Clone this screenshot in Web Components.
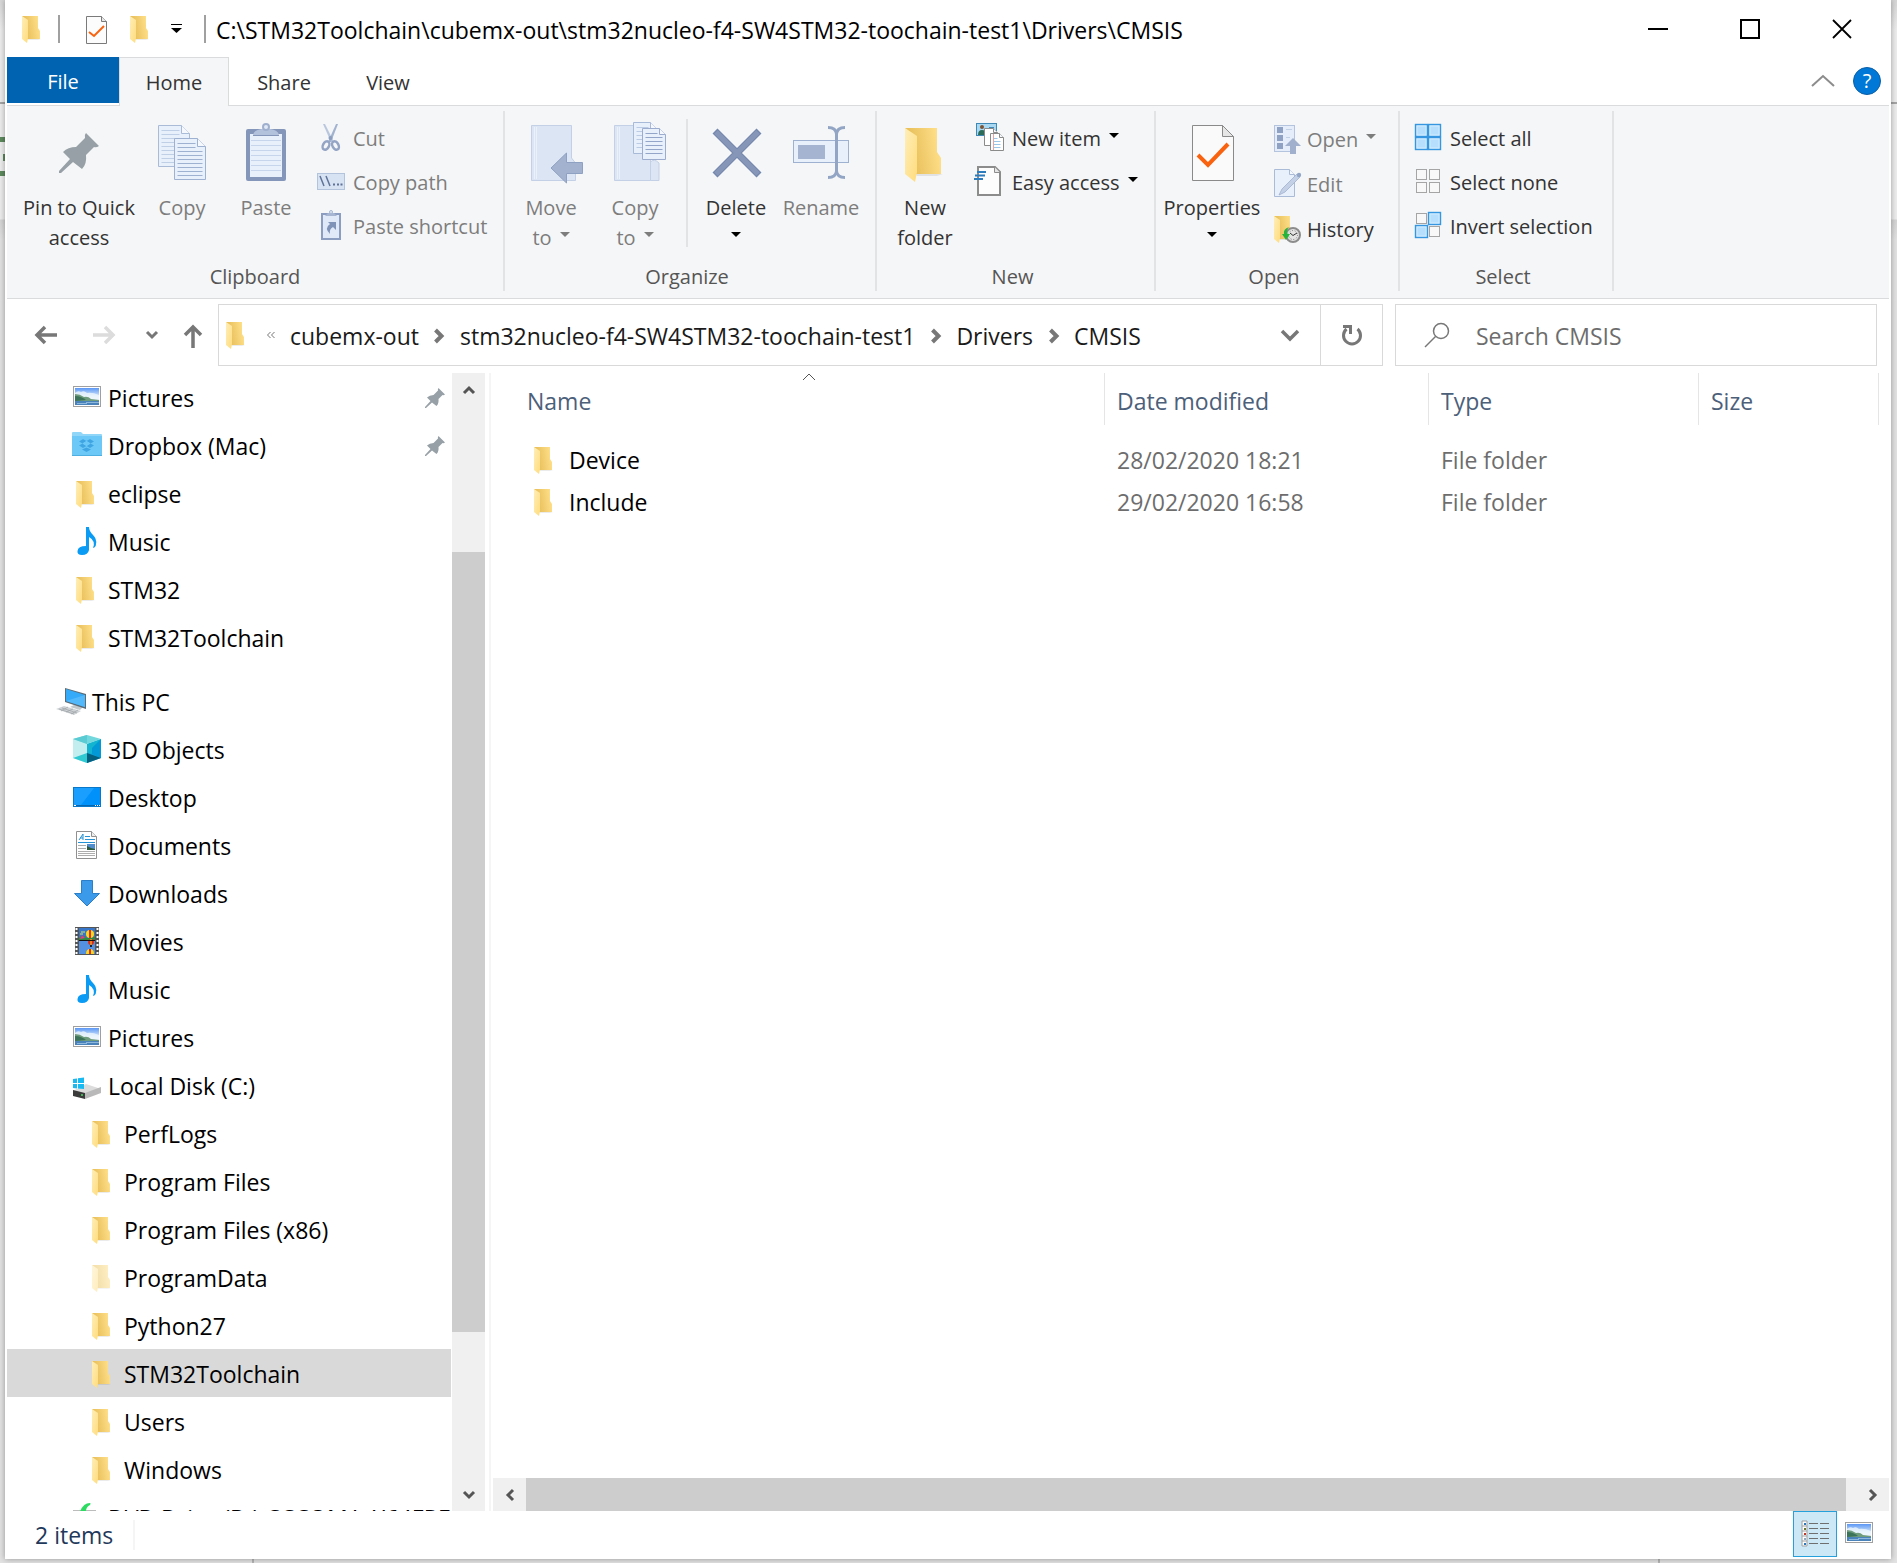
<!DOCTYPE html>
<html lang="en">
<head>
<meta charset="utf-8">
<title>CMSIS</title>
<style>
    html, body {
        height: 100%;
        margin: 0;
    }

    /* the strip of desktop that shows behind the window */
    body {
        font-family: "Open Sans", "Noto Sans", sans-serif;
        font-size: 23px;
        line-height: 30px;
        color: #000;
        overflow: hidden;
        background:
            linear-gradient(#5d8a5d, #5d8a5d) 0 137px / 5px 5px no-repeat,
            linear-gradient(#5d8a5d, #5d8a5d) 3px 154px / 2px 7px no-repeat,
            linear-gradient(#5d8a5d, #5d8a5d) 0 171px / 5px 5px no-repeat,
            linear-gradient(#b5b5b5, #b5b5b5) 252px 100% / 2px 4px no-repeat,
            linear-gradient(#b5b5b5, #b5b5b5) 1658px 100% / 2px 4px no-repeat,
            linear-gradient(#a5a5a5, #a5a5a5) 0 102px / 100% 2px no-repeat,
            linear-gradient(#d6d6d6, #ededed 30px, #ededed 219px, #d4d4d4 220px, #e2e2e2 240px);
    }
</style>
</head>
<body>
<explorer-window>
    <title-bar slot="title">C:\STM32Toolchain\cubemx-out\stm32nucleo-f4-SW4STM32-toochain-test1\Drivers\CMSIS</title-bar>
    <ribbon-tabs slot="tabs"></ribbon-tabs>

    <ribbon-bar slot="ribbon">
        <ribbon-group label="Clipboard" style="--group-width: 496px">
            <ribbon-button icon="pin" width="130">Pin to Quick<br>access</ribbon-button>
            <ribbon-button icon="copy" width="76" disabled>Copy</ribbon-button>
            <ribbon-button icon="paste" width="92" disabled>Paste</ribbon-button>
            <ribbon-stack>
                <ribbon-item icon="cut" disabled>Cut</ribbon-item>
                <ribbon-item icon="copypath" disabled>Copy path</ribbon-item>
                <ribbon-item icon="pasteshortcut" disabled>Paste shortcut</ribbon-item>
            </ribbon-stack>
        </ribbon-group>
        <ribbon-group label="Organize" style="--group-width: 370px">
            <ribbon-button icon="moveto" width="78" disabled caret>Move<br>to</ribbon-button>
            <ribbon-button icon="copyto" width="90" disabled caret>Copy<br>to</ribbon-button>
            <ribbon-divider></ribbon-divider>
            <ribbon-button icon="delete" width="84" caret="below">Delete</ribbon-button>
            <ribbon-button icon="rename" width="86" disabled>Rename</ribbon-button>
        </ribbon-group>
        <ribbon-group label="New" style="--group-width: 277px; --stack-indent: 9px">
            <ribbon-button icon="newfolder" width="82">New<br>folder</ribbon-button>
            <ribbon-stack>
                <ribbon-item icon="newitem" caret>New item</ribbon-item>
                <ribbon-item icon="easyaccess" caret>Easy access</ribbon-item>
            </ribbon-stack>
        </ribbon-group>
        <ribbon-group label="Open" style="--group-width: 242px; --row-height: 45px; --stack-indent: 9px">
            <ribbon-button icon="properties" width="98" caret="below">Properties</ribbon-button>
            <ribbon-stack>
                <ribbon-item icon="open" disabled caret>Open</ribbon-item>
                <ribbon-item icon="edit" disabled>Edit</ribbon-item>
                <ribbon-item icon="history">History</ribbon-item>
            </ribbon-stack>
        </ribbon-group>
        <ribbon-group label="Select" style="--group-width: 212px; --stack-indent: 6px">
            <ribbon-stack>
                <ribbon-item icon="selectall">Select all</ribbon-item>
                <ribbon-item icon="selectnone">Select none</ribbon-item>
                <ribbon-item icon="invert">Invert selection</ribbon-item>
            </ribbon-stack>
        </ribbon-group>
    </ribbon-bar>

    <address-bar slot="address"></address-bar>

    <nav-tree slot="nav">
        <nav-item icon="pictures" pinned>Pictures</nav-item>
        <nav-item icon="dropbox" pinned>Dropbox (Mac)</nav-item>
        <nav-item icon="folder">eclipse</nav-item>
        <nav-item icon="music">Music</nav-item>
        <nav-item icon="folder">STM32</nav-item>
        <nav-item icon="folder">STM32Toolchain</nav-item>
        <nav-item icon="pc" level="1">This PC</nav-item>
        <nav-item icon="objects">3D Objects</nav-item>
        <nav-item icon="desktop">Desktop</nav-item>
        <nav-item icon="documents">Documents</nav-item>
        <nav-item icon="downloads">Downloads</nav-item>
        <nav-item icon="movies">Movies</nav-item>
        <nav-item icon="music">Music</nav-item>
        <nav-item icon="pictures">Pictures</nav-item>
        <nav-item icon="disk">Local Disk (C:)</nav-item>
        <nav-item icon="folder" level="3">PerfLogs</nav-item>
        <nav-item icon="folder" level="3">Program Files</nav-item>
        <nav-item icon="folder" level="3">Program Files (x86)</nav-item>
        <nav-item icon="folder" level="3" faded>ProgramData</nav-item>
        <nav-item icon="folder" level="3">Python27</nav-item>
        <nav-item icon="folder" level="3" selected>STM32Toolchain</nav-item>
        <nav-item icon="folder" level="3">Users</nav-item>
        <nav-item icon="folder" level="3">Windows</nav-item>
        <nav-item icon="dvd">DVD Drive (D:) CCCOMA_X64FRE</nav-item>
    </nav-tree>

    <file-list slot="files"></file-list>
    <status-bar slot="status">2 items</status-bar>
</explorer-window>

<script>
    // ---------- icons ----------

    const folderShape = `
        <path d="M0 0H16V12L18 15V23H5Z" fill="url(#back)"/>
        <path d="M5 23H19L16 24H6Z" fill="#000" opacity=".08"/>
        <path d="M0 0L6 4V22L5 27L0 23Z" fill="url(#flap)"/>`;

    const folderDefs = `
        <defs>
            <linearGradient id="back" x1="0" x2="1" y1=".6" y2=".4">
                <stop offset=".2" stop-color="#e9c05c"/><stop offset="1" stop-color="#ffe08a"/>
            </linearGradient>
            <linearGradient id="flap" x1="0" x2="1" y1="0" y2="1">
                <stop offset="0" stop-color="#ffeeb8"/><stop offset="1" stop-color="#ffdc7d"/>
            </linearGradient>
        </defs>`;

    const pinShape = `<path fill="#96a0a6" d="M37 11L50 24Q47 26 45 25L37 33Q38 42 33 47L24 40L12 51H10V49L21 37L14 30Q19 25 27 25L36 16Q35 13 37 11Z"/>`;

    // Sheet of paper with a folded corner and ruled lines
    function page(x, y, w, h, fold, stroke, fill, line, step) {
        let rules = '';
        for (let ly = y + 5; ly < y + h - 2; ly += step) {
            const end = ly < y + fold + 2 ? x + w - fold - 2 : x + w - 3;
            rules += `M${x + 3} ${ly}H${end}`;
        }
        return `
            <path d="M${x} ${y}H${x + w - fold}L${x + w} ${y + fold}V${y + h}H${x}Z" fill="${fill}" stroke="${stroke}"/>
            <path d="M${x + w - fold} ${y}V${y + fold}H${x + w}" fill="#f5f8fd" stroke="${stroke}"/>
            <path d="${rules}" stroke="${line}"/>`;
    }

    const landscape = `
        <defs><linearGradient id="sky" x2="0" y2="1">
            <stop offset="0" stop-color="#5b97f5"/><stop offset=".55" stop-color="#e4f1fb"/>
        </linearGradient></defs>
        <rect x="1.5" y="3.5" width="27" height="20" fill="#fff" stroke="#a0a0a0"/>
        <rect x="3" y="5" width="24" height="17" fill="url(#sky)"/>
        <path d="M3 10Q6 7 9 9Q12 7 15 10Q20 9 27 12V16H3Z" fill="#eef6fc" opacity=".8"/>
        <path d="M3 11Q8 11 12 14Q16 13 19 16L27 17V18H3Z" fill="#6f9c7c"/>
        <path d="M3 13Q9 13 14 17L3 18Z" fill="#3b7358"/>
        <rect x="3" y="18" width="24" height="4" fill="#4a82ba"/>
        <path d="M14 19.5H27M5 20.5H15" stroke="#8db6dc"/>`;

    const cell = (x, y, on) => on
        ? `<rect x="${x + .5}" y="${y + .5}" width="12" height="12" fill="#b5dffc" stroke="#3697e0" stroke-width="1.4"/><rect x="${x + 2}" y="${y + 2}" width="9" height="9" fill="none" stroke="#dcf0fe" stroke-width=".7"/>`
        : `<rect x="${x + 1.5}" y="${y + 1.5}" width="10" height="10" fill="#f8f8f8" stroke="#a5a5a5"/>`;

    const note = `<path fill="#0a9bf4" d="M14 0H17Q17 4 21 8Q25 12 24 17Q24 20 21 21Q24 14 17 10V23Q16 28 10 28Q5 28 5.500 24Q6 19 14 19Z"/>`;

    // name: [width, height, markup]
    const icons = {
        folder: [30, 30, `${folderDefs}<g transform="translate(4 2)">${folderShape}</g>`],
        newfolder: [60, 64, `${folderDefs}<g transform="translate(10 6) scale(2)">${folderShape}</g>`],
        pin: [60, 64, pinShape],
        pictures: [30, 30, landscape],
        music: [30, 30, note],
        dropbox: [30, 30, `
            <path d="M0 2Q0 1 1 1H9L11 3H29Q30 3 30 4V24Q30 25 29 25H1Q0 25 0 24Z" fill="#8fd6f9"/>
            <path d="M0 5H30V24Q30 25 29 25H1Q0 25 0 24Z" fill="#6cc9f7"/>
            <path d="M0 24.500H30" stroke="#4fafe0"/>
            <g fill="#40a6e3"><path d="M11 8L14.500 10L10.500 12.500L7 10.500ZM18 8L22 10.500L18.500 12.500L14.500 10ZM7 14.500L10.500 12.500L14.500 15L11 17ZM22 14.500L18.500 12.500L14.500 15L18 17ZM10 18.500L14.500 16.500L19 18.500L14.500 21Z"/></g>
            <path d="M14.500 10L18.500 12.500L14.500 15L10.500 12.500Z" fill="#6cc9f7"/>`],
        pc: [30, 30, `
            <path d="M18 18L27 20L24 23L14 20Z" fill="#c4c9cd"/>
            <path d="M9 1L30 7V22L9 15Z" fill="#5d6b75"/>
            <path d="M10 2L29 8V20L10 14Z" fill="#35aaf8"/>
            <path d="M10 14L29 8V20Z" fill="#54b9fb"/>
            <path d="M0 22L8 19L25 24L18 28Z" fill="#cfd3d6"/>
            <path d="M3 22L18 27M6 21L21 26M5 24L12 20M10 25L17 22M15 27L22 23" stroke="#9ea4a8" stroke-width=".7"/>`],
        objects: [30, 30, `
            <path d="M1 4L15 9V28L1 23Z" fill="#c3eef0"/>
            <path d="M29 4L15 9V28L29 23Z" fill="#0aa5dc"/>
            <path d="M15 9L29 4V18L15 19Z" fill="#13b4cf"/>
            <path d="M29 4L20 13V19L29 23Z" fill="#0398d6"/>
            <path d="M1 4L15 0L29 4L15 9Z" fill="#73d8dd"/>
            <path d="M1 4L15 0V9Z" fill="#5acbd2"/>
            <path d="M1 23L15 18V28Z" fill="#2fc9d2"/>
            <path d="M29 23L15 18V28Z" fill="#05607f"/>`],
        desktop: [30, 30, `
            <rect x="1.500" y="4.500" width="27" height="19" fill="#1a9fff" stroke="#0a78c8"/>
            <path d="M22 5H28V22H9Z" fill="#0091fb"/>
            <path d="M2 22.500H28" stroke="#0667b0"/>
            <path d="M2 22.500H4M23 22.500H24M25 22.500H26M27 22.500H28" stroke="#fff"/>`],
        documents: [30, 30, `
            <path d="M4.500 .5H19.500L24.500 5.500V27.500H4.500Z" fill="#fff" stroke="#909090"/>
            <path d="M19.500 .5V5.500H24.500" fill="#eee" stroke="#909090"/>
            <path d="M7 9L11 3V9M8 7H11M13 5.500H18M13 8.500H23M6 11.500H23" stroke="#2492d4" fill="none"/>
            <path d="M6 14.500H14M6 17.500H14M6 20.500H23M6 22.500H23M6 24.500H23" stroke="#adadad"/>
            <rect x="15" y="13" width="8" height="6" fill="#4f8dce"/><path d="M15 15L19 17L23 18V19H15Z" fill="#2c5a3b"/>`],
        downloads: [30, 30, `<path d="M9.500 1.500H20.500V14.500H27.500L15 27L2.500 14.500H9.500Z" fill="#3b9bea" stroke="#2b7fc9"/>`],
        movies: [30, 30, `
            <rect x="3" y="0" width="24" height="28" fill="#555"/>
            <path d="M4.500 1V28M25.500 1V28" stroke="#fff" stroke-width="2" stroke-dasharray="2 2"/>
            <rect x="7" y="1" width="16" height="12" fill="#3776c8"/><rect x="7" y="14" width="16" height="13" fill="#5491e0"/>
            <path d="M7 11Q11 6 14 11L23 10V13H7Z" fill="#2f8a3c"/><path d="M8 12L10 8L13 11Z" fill="#e2398c"/>
            <circle cx="18" cy="7" r="4" fill="#ffd91c"/><path d="M18 3V11" stroke="#e0301e" stroke-width="2"/>
            <circle cx="19" cy="15" r="3" fill="#d82b1e"/><path d="M19 12V18" stroke="#ffd91c"/><path d="M18 18H20V20H18Z" fill="#222"/>
            <path d="M14 27Q14 22 18 22Q22 22 22 27Z" fill="#ffd91c"/><path d="M18 22V27" stroke="#e0301e" stroke-width="2"/>
            <path d="M9 5H13M8 7H11" stroke="#d8e46a"/><path d="M7 13.500H23" stroke="#111"/>`],
        disk: [30, 30, `
            <path d="M1 20L14 13L29 18L13 23Z" fill="#dcdcdc"/>
            <path d="M1 19L13 22V28L1 25Z" fill="#3b3b3b"/>
            <path d="M13 22L29 16V22L13 28Z" fill="#b9b9b9"/>
            <circle cx="10" cy="24" r="1" fill="#3ddc5a"/>
            <path fill="#19b9f2" d="M1 8L5 7.500V12H1ZM6 7.300L12 6.500V12H6ZM1 13H5V17.500L1 17ZM6 13H12V18L6 17.600Z"/>`],
        dvd: [30, 30, `
            <path d="M1 7H24V12H1Z" fill="#bcbcbc"/>
            <path d="M8 9Q11 0 18 0Q19 0 18 2Q13 4 14 12H8Z" fill="#2edb62"/>`],
        smalldoc: [30, 30, `
            <path d="M4.500 2.500H19.500L24.500 7.500V29.500H4.500Z" fill="#fcfcfc" stroke="#7a7a7a"/>
            <path d="M19.500 2.500V7.500H24.500" fill="#e8e8e8" stroke="#7a7a7a"/>
            <path d="M7 18L12 22L22 12" fill="none" stroke="#f9630f" stroke-width="2"/>`],
        copy: [60, 64, page(6.5, 3.5, 31, 41, 8, '#aabbd8', '#e8f0fb', '#bfcfe6', 4) + page(22.5, 16.5, 31, 41, 8, '#9fb1d0', '#e8f0fb', '#9fb1d0', 4)],
        paste: [60, 64, `
            <rect x="10" y="7" width="40" height="52" rx="2" fill="#8496ba"/>
            <rect x="14" y="12" width="32" height="43" fill="#e8f0fb"/>
            <path d="M15 18.500H45M15 23.500H45M15 28.500H45M15 33.500H45M15 38.500H45M15 43.500H45M15 48.500H45" stroke="#c6d5ec"/>
            <path d="M17 13Q18 8 26 7H34Q42 8 43 13Z" fill="#b3c2dc"/><path d="M17 13.500H43" stroke="#8496ba"/>
            <circle cx="30" cy="5" r="3" fill="#e0e9f6" stroke="#9fb0cf" stroke-width="2"/>`],
        moveto: [60, 64, `
            <path d="M10.500 3.500H50.500V36L54.500 41V58.500H10.500Z" fill="#dbe5f4" stroke="#c3d0e6"/>
            <path d="M13.500 5V57M15.500 5V57" stroke="#eaf1fb"/>
            <path d="M30 46L45.500 31V40.500H61.500V51.500H45.500V61Z" fill="#a3b2ce" stroke="#8fa1c2"/>`],
        copyto: [60, 64, `
            <path d="M9.500 3.500H45.500V58.500H9.500ZM45.500 40Q49 36 54 41V58.500H45.500Z" fill="#dbe5f4" stroke="#c3d0e6"/>
            <path d="M12.500 5V57M14.500 5V57" stroke="#eaf1fb"/>
            ${page(28.5, .5, 23, 31, 6, '#a9bad8', '#e8f0fb', '#bccbe4', 4)}${page(37.5, 6.5, 23, 31, 6, '#9bacce', '#e8f0fb', '#93a6c9', 4)}`],
        delete: [60, 64, `
            <path d="M9 9L53 53M53 9L9 53" stroke="#7487ad" stroke-width="7"/>
            <path d="M10 10L52 52M52 10L10 52" stroke="#8596b8" stroke-width="5"/>`],
        rename: [60, 64, `
            <rect x="2.500" y="18.500" width="55" height="22" fill="#e8f0fc" stroke="#9fb1d0"/>
            <rect x="7" y="23" width="27" height="14" fill="#a5b4d0"/>
            <path d="M37 5.500Q45 5.500 45.500 12V49Q45 55.500 37 55.500M54 5.500Q46 5.500 45.500 12M45.500 49Q46 55.500 54 55.500" fill="none" stroke="#92a5c5" stroke-width="3"/>`],
        properties: [60, 64, `
            <path d="M10.500 3.500H40.500L51.500 14.500V58.500H10.500Z" fill="#fafafa" stroke="#8a8a8a"/>
            <path d="M40.500 3.500V14.500H51.500Z" fill="#e6e6e6" stroke="#8a8a8a"/>
            <path d="M16 33L26 43L46 22" fill="none" stroke="#f9630f" stroke-width="4"/>`],
        cut: [30, 30, `
            <path d="M7 0L9 0L18 18L15 18Z" fill="#b9c7de"/><path d="M22 0L20 0L12 18L15 18Z" fill="#a2b3d0"/>
            <circle cx="14.500" cy="14" r="2" fill="#8c9ebf"/>
            <ellipse cx="10" cy="21.500" rx="3" ry="4.500" transform="rotate(28 10 21.500)" fill="none" stroke="#93a4c4" stroke-width="2.500"/>
            <ellipse cx="19.500" cy="21.500" rx="3" ry="4.500" transform="rotate(-28 19.500 21.500)" fill="none" stroke="#93a4c4" stroke-width="2.500"/>`],
        copypath: [30, 30, `
            <rect x="1.500" y="5.500" width="27" height="16" fill="#d7e2f2" stroke="#b4c3dc"/>
            <path d="M4 8L8 18M10 8L14 18" stroke="#5f7399" stroke-width="1.500"/>
            <path d="M17 16.500H19M21 16.500H23M24.500 16.500H26.500" stroke="#5f7399" stroke-width="2"/>`],
        pasteshortcut: [30, 30, `
            <rect x="6" y="2" width="18" height="25" fill="#dfe9f7" stroke="#8b9dc0" stroke-width="2"/>
            <path d="M9 4L12 1H18L21 4Z" fill="#a6b6d2"/><circle cx="15" cy="0" r="1.500" fill="#dfe9f7" stroke="#a6b6d2"/>
            <path d="M12 10H20V18L17 15Q13 17 14 22Q8 16 14 12Z" fill="#7f93b8"/>`],
        newitem: [30, 30, `
            <rect x="1.500" y="-.5" width="20" height="12" fill="#a9d8f3" stroke="#3f87b5"/>
            <circle cx="7" cy="3" r="2" fill="#7b5436"/><path d="M3 11Q3 6 7 6Q11 6 11 11Z" fill="#2c6b58"/><path d="M14 3.500H19" stroke="#3f87b5"/>
            ${page(9.5, 4.5, 13, 17, 4, '#8a8a8a', '#fff', '#fff', 9)}
            ${page(15.5, 9.5, 13, 17, 4, '#8a8a8a', '#fff', '#9cc6e8', 3)}
            <path d="M18.500 10V26" stroke="#f0a0a0"/>`],
        easyaccess: [30, 30, `
            <path d="M3 -1H20L25 4V27H3Z" fill="#fdfdfd" stroke="#8c8c8c" stroke-width="2"/>
            <path d="M19.500 -1V4.500H25" fill="#e6e6e6" stroke="#8c8c8c"/>
            <path d="M2 4H11M0 7.500H10M-1 11H8" stroke="#2f7cbd" stroke-width="1.800"/>`],
        open: [30, 30, `
            <rect x="4.500" y=".5" width="20" height="26" fill="#e4edf9" stroke="#b4c4de"/>
            <path d="M7 2H13V8H7ZM7 10H13V16H7ZM7 18H13V24H7Z" fill="#8fa2c4"/><path d="M16 4.500H22M16 12.500H20" stroke="#c3d1e7"/>
            <path d="M23 13L31 21H26V29H20V21H15Z" fill="#a0b0cd"/>`],
        edit: [30, 30, `
            <path d="M4.500 -.5H19.500L24.500 4.500V26.500H4.500Z" fill="#e8f0fb" stroke="#aabbd8"/>
            <path d="M19.500 -.5V4.500H24.500" fill="#f5f8fd" stroke="#aabbd8"/>
            <path d="M9 25L12 19L27 4L30 7L15 22Z" fill="#c3d0e5" stroke="#9fb0ce" stroke-width=".8"/><circle cx="29" cy="5" r="2.200" fill="#94a6c7"/>`],
        history: [30, 30, `
            ${folderDefs}<g transform="translate(4 1)">${folderShape}</g>
            <circle cx="23" cy="20" r="7" fill="#e4e4e4" stroke="#8c8c8c" stroke-width="2"/>
            <circle cx="23" cy="20" r="4.500" fill="none" stroke="#777" stroke-dasharray="1 1.800"/>
            <path d="M20 18L23 20.500L27 18" stroke="#333" fill="none"/>
            <path d="M19 12Q13 14 14 19H12L16 25L20 19H17.500Q16 15 19 12Z" fill="#27b43a"/>`],
        selectall: [30, 30, cell(2, 0, 1) + cell(15, 0, 1) + cell(2, 13, 1) + cell(15, 13, 1)],
        selectnone: [30, 30, cell(2, 0) + cell(15, 0) + cell(2, 13) + cell(15, 13)],
        invert: [30, 30, cell(2, 0) + cell(15, 0, 1) + cell(2, 13, 1) + cell(15, 13)],
        smallpin: [20, 20, `<g transform="scale(.5) translate(-10 -11)">${pinShape}</g>`],
        back: [24, 24, `<path d="M23 12H3M11 4L3 12L11 20" fill="none" stroke="currentColor" stroke-width="3.500"/>`],
        forward: [24, 24, `<path d="M1 12H21M13 4L21 12L13 20" fill="none" stroke="currentColor" stroke-width="3.500"/>`],
        up: [24, 24, `<path d="M12 25V4M4 12L12 4L20 12" fill="none" stroke="currentColor" stroke-width="3.500"/>`],
        chevdown: [24, 24, `<path d="M4 8L12 16L20 8" fill="none" stroke="currentColor" stroke-width="3.500"/>`],
        chevsmall: [14, 14, `<path d="M2 4L7 9L12 4" fill="none" stroke="currentColor" stroke-width="3"/>`],
        chevup: [14, 14, `<path d="M2 10L7 5L12 10" fill="none" stroke="currentColor" stroke-width="3"/>`],
        chevleft: [14, 14, `<path d="M10 2L5 7L10 12" fill="none" stroke="currentColor" stroke-width="3"/>`],
        chevright: [14, 14, `<path d="M4 2L9 7L4 12" fill="none" stroke="currentColor" stroke-width="3"/>`],
        crumb: [14, 14, `<path d="M3.500 1L9.500 7L3.500 13" fill="none" stroke="currentColor" stroke-width="4"/>`],
        guillemet: [10, 8, `<path d="M4.500 1L1.500 4L4.500 7M8.500 1L5.500 4L8.500 7" fill="none" stroke="currentColor"/>`],
        refresh: [24, 24, `<path d="M6.500 6A8.500 8.500 0 1 0 17.500 6" fill="none" stroke="currentColor" stroke-width="3"/><path d="M3 2H12V11H9V5H3Z" fill="currentColor"/>`],
        search: [26, 26, `<circle cx="17" cy="9" r="7.500" fill="none" stroke="currentColor" stroke-width="1.500"/><path d="M11.500 14.500L1 25" stroke="currentColor" stroke-width="1.500"/>`],
        minimize: [22, 22, `<path d="M1 11H21" stroke="#000" stroke-width="2"/>`],
        maximize: [22, 22, `<rect x="2" y="2" width="18" height="18" fill="none" stroke="#000" stroke-width="2"/>`],
        close: [22, 22, `<path d="M2 2L20 20M20 2L2 20" stroke="#000" stroke-width="1.800"/>`],
        collapse: [24, 14, `<path d="M1 12L12 2L23 12" fill="none" stroke="#8c8c8c" stroke-width="2"/>`],
        sort: [14, 8, `<path d="M1 7L7 1L13 7" fill="none" stroke="#555"/>`],
        menu: [12, 10, `<path d="M1 .5H12" stroke="#000"/><path d="M1 4H12L6.500 9Z" fill="#000"/>`],
        details: [28, 28, `
            <path d="M1 1H6V26H1ZM1 6H6M1 11H6M1 16H6M1 21H6" fill="#fff" stroke="#a0a0a0"/>
            <path d="M3 3H5V5H3ZM3 23H5V25H3Z" fill="#2a7ac0"/><path d="M3 8H5V10H3Z" fill="#6a7a30"/><path d="M3 13H5V15H3Z" fill="#c0392b"/><path d="M3 18H5V20H3Z" fill="#8fa8c4"/>
            <path d="M8 3.500H17M19 3.500H28M8 8.500H17M19 8.500H28M8 13.500H17M19 13.500H28M8 18.500H17M19 18.500H28M8 23.500H17M19 23.500H28" stroke="#6f6f6f"/>`],
    };

    class AppIcon extends HTMLElement {
        constructor() {
            super();
            this.attachShadow({ mode: 'open' });
        }

        connectedCallback() {
            const [w, h, markup] = icons[this.getAttribute('name')];
            this.shadowRoot.innerHTML = `
                <style>
                    :host { display: inline-flex; flex: none; }
                    svg { display: block; overflow: visible; }
                </style>
                <svg width="${w}" height="${h}" viewBox="0 0 ${w} ${h}" aria-hidden="true">${markup}</svg>
            `;
        }
    }
    customElements.define('app-icon', AppIcon);

    // Base for everything that only renders once from its attributes
    class View extends HTMLElement {
        constructor() {
            super();
            this.attachShadow({ mode: 'open' });
        }

        connectedCallback() {
            this.shadowRoot.innerHTML = `
                <style>
                    * { box-sizing: border-box; }
                    button {
                        display: flex;
                        align-items: center;
                        justify-content: center;
                        margin: 0;
                        padding: 0;
                        border: 0;
                        background: none;
                        font: inherit;
                        color: inherit;
                    }
                    .caret {
                        display: inline-block;
                        margin-left: 8px;
                        vertical-align: 8px;
                        border: 5px solid transparent;
                        border-top-color: currentColor;
                        border-bottom: 0;
                    }
                    .caret.below { margin-left: 0; }
                    button:enabled .caret { color: #000; }
                </style>
                ${this.template()}
            `;
        }
    }

    customElements.define('explorer-window', class extends View {
        template() {
            return `
                <style>
                    :host {
                        display: flex;
                        flex-direction: column;
                        box-sizing: border-box;
                        height: calc(100vh - 4px);
                        margin: 0 6px 4px 5px;
                        padding: 0 2px;
                        background: #fff;
                        box-shadow: 0 0 6px rgba(0, 0, 0, 0.35);
                    }
                    .body {
                        flex: 1;
                        min-height: 0;
                        display: flex;
                        padding-top: 7px;
                    }
                    slot[name="files"] { display: contents; }
                </style>
                <slot name="title"></slot>
                <slot name="tabs"></slot>
                <slot name="ribbon"></slot>
                <slot name="address"></slot>
                <div class="body">
                    <slot name="nav"></slot>
                    <slot name="files"></slot>
                </div>
                <slot name="status"></slot>
            `;
        }
    });

    customElements.define('title-bar', class extends View {
        template() {
            return `
                <style>
                    :host { display: flex; align-items: center; height: 57px; padding: 0 1px 0 11px; }
                    .sep { width: 2px; height: 28px; background: #a0a0a0; }
                    .quick { display: flex; align-items: center; gap: 14px; padding: 0 22px; }
                    .first { margin-right: 10px; }
                    h1 { flex: 1; margin: 0 0 0 10px; padding-top: 2px; font: inherit; white-space: nowrap; overflow: hidden; }
                    .window { align-self: stretch; display: flex; }
                    .window button { width: 92px; }
                </style>
                <app-icon class="first" name="folder"></app-icon>
                <span class="sep"></span>
                <div class="quick">
                    <button aria-label="Properties"><app-icon name="smalldoc"></app-icon></button>
                    <button aria-label="New folder"><app-icon name="folder"></app-icon></button>
                    <button aria-label="Customize"><app-icon name="menu"></app-icon></button>
                </div>
                <span class="sep"></span>
                <h1><slot></slot></h1>
                <div class="window">
                    <button aria-label="Minimize"><app-icon name="minimize"></app-icon></button>
                    <button aria-label="Maximize"><app-icon name="maximize"></app-icon></button>
                    <button aria-label="Close"><app-icon name="close"></app-icon></button>
                </div>
            `;
        }
    });

    customElements.define('ribbon-tabs', class extends View {
        template() {
            return `
                <style>
                    :host {
                        display: flex;
                        box-sizing: border-box;
                        height: 49px;
                        border-bottom: 1px solid #dadbdc;
                        font-size: 20px;
                        color: #333;
                    }
                    .tab { width: 110px; height: 48px; padding-top: 3px; }
                    .file { width: 112px; height: 46px; background: #0063b1; color: #fff; }
                    .active {
                        height: 49px;
                        padding-top: 1px;
                        border: 1px solid #dadbdc;
                        border-bottom: 0;
                        background: #f5f6f7;
                    }
                    .view { width: 98px; }
                    .right { display: flex; align-items: center; gap: 18px; margin-left: auto; padding-right: 8px; }
                    .help { width: 28px; height: 28px; border-radius: 50%; background: #0078d7; border: 1px solid #0a5fa8; color: #fff; }
                </style>
                <button class="tab file">File</button>
                <button class="tab active">Home</button>
                <button class="tab">Share</button>
                <button class="tab view">View</button>
                <div class="right">
                    <button aria-label="Collapse ribbon"><app-icon name="collapse"></app-icon></button>
                    <button class="help">?</button>
                </div>
            `;
        }
    });

    customElements.define('ribbon-bar', class extends View {
        template() {
            return `
                <style>
                    :host {
                        display: flex;
                        box-sizing: border-box;
                        height: 193px;
                        padding: 5px 0 7px;
                        background: #f5f6f7;
                        border-bottom: 1px solid #dadbdc;
                        font-size: 20px;
                        color: #333;
                    }
                </style>
                <slot></slot>
            `;
        }
    });

    customElements.define('ribbon-group', class extends View {
        template() {
            return `
                <style>
                    :host {
                        flex: none;
                        display: flex;
                        flex-direction: column;
                        width: var(--group-width);
                        border-right: 2px solid #e2e3e4;
                    }
                    .items { flex: 1; display: flex; padding: 6px 0 0 7px; }
                    .label { height: 29px; text-align: center; color: #555; }
                    :host(:not(:first-child)) .label { padding-right: 6px; }
                </style>
                <div class="items"><slot></slot></div>
                <div class="label">${this.getAttribute('label')}</div>
            `;
        }
    });

    customElements.define('ribbon-stack', class extends View {
        template() {
            return `
                <style>
                    :host { display: flex; flex-direction: column; align-items: flex-start; padding-left: var(--stack-indent, 4px); }
                </style>
                <slot></slot>
            `;
        }
    });

    customElements.define('ribbon-divider', class extends View {
        template() {
            return `
                <style>
                    :host { width: 2px; height: 128px; margin: 2px 6px 0; background: #e2e3e4; }
                </style>
            `;
        }
    });

    class RibbonButton extends View {
        get state() {
            return this.hasAttribute('disabled') ? 'disabled' : '';
        }

        get caret() {
            if (!this.hasAttribute('caret')) return '';
            return this.getAttribute('caret') === 'below'
                ? '<br><span class="caret below"></span>'
                : '<span class="caret"></span>';
        }

        get content() {
            return `
                <button ${this.state}>
                    <app-icon name="${this.getAttribute('icon')}"></app-icon>
                    <span class="label"><slot></slot>${this.caret}</span>
                </button>
            `;
        }

        template() {
            return `
                <style>
                    button { flex-direction: column; width: ${this.getAttribute('width')}px; padding-top: 5px; gap: 7px; }
                    button:disabled { color: #7d7d7d; }
                    .label { white-space: nowrap; }
                </style>
                ${this.content}
            `;
        }
    }
    customElements.define('ribbon-button', RibbonButton);

    customElements.define('ribbon-item', class extends RibbonButton {
        template() {
            return `
                <style>
                    button { height: var(--row-height, 44px); gap: 7px; }
                    button:disabled { color: #7d7d7d; }
                    .label { white-space: nowrap; }
                </style>
                ${this.content}
            `;
        }
    });

    customElements.define('address-bar', class extends View {
        template() {
            const crumbs = ['cubemx-out', 'stm32nucleo-f4-SW4STM32-toochain-test1', 'Drivers', 'CMSIS'];
            return `
                <style>
                    :host { display: flex; height: 62px; padding: 5px 12px 0 0; }
                    .nav { display: flex; align-items: center; width: 211px; color: #777; }
                    .nav button { width: 58px; height: 62px; }
                    .nav .lead { margin-left: 10px; }
                    .nav .small { width: 38px; }
                    .nav .up { width: 44px; }
                    .nav button:disabled { color: #dcdcdc; }
                    .path { flex: 1; display: flex; align-items: center; border: 1px solid #d9d9d9; padding-left: 3px; color: #1a1a1a; }
                    .gray { color: #777; }
                    .more { width: 38px; }
                    .crumbs { display: flex; align-items: center; padding-top: 2px; }
                    .crumbs app-icon { width: 41px; justify-content: center; color: #777; }
                    .drop { margin-left: auto; width: 60px; height: 60px; }
                    .refresh { width: 62px; height: 60px; border-left: 1px solid #d9d9d9; }
                    .search { display: flex; align-items: center; gap: 26px; width: 482px; margin-left: 12px; padding-left: 28px; border: 1px solid #d9d9d9; color: #777; }
                    input { flex: 1; min-width: 0; border: 0; outline: 0; padding: 2px 0 0; font: inherit; background: none; }
                    input::placeholder { color: #6d6d6d; opacity: 1; }
                </style>
                <div class="nav">
                    <button class="lead" aria-label="Back"><app-icon name="back"></app-icon></button>
                    <button disabled aria-label="Forward"><app-icon name="forward"></app-icon></button>
                    <button class="small" aria-label="Recent"><app-icon name="chevsmall"></app-icon></button>
                    <button class="up" aria-label="Up"><app-icon name="up"></app-icon></button>
                </div>
                <div class="path">
                    <app-icon name="folder"></app-icon>
                    <button class="more gray" aria-label="More"><app-icon name="guillemet"></app-icon></button>
                    <div class="crumbs">
                        ${crumbs.map(c => `<button>${c}</button>`).join('<app-icon name="crumb"></app-icon>')}
                    </div>
                    <button class="drop gray" aria-label="Previous locations"><app-icon name="chevdown"></app-icon></button>
                    <button class="refresh gray" aria-label="Refresh"><app-icon name="refresh"></app-icon></button>
                </div>
                <label class="search">
                    <app-icon name="search"></app-icon>
                    <input type="text" placeholder="Search CMSIS" aria-label="Search">
                </label>
            `;
        }
    });

    customElements.define('scroll-bar', class extends View {
        template() {
            const horizontal = this.hasAttribute('horizontal');
            const [start, end] = horizontal ? ['chevleft', 'chevright'] : ['chevup', 'chevsmall'];
            return `
                <style>
                    :host {
                        flex: none;
                        display: flex;
                        flex-direction: ${horizontal ? 'row' : 'column'};
                        ${horizontal ? 'height' : 'width'}: 33px;
                        background: #f0f0f0;
                        color: #555;
                    }
                    button { flex: none; width: 33px; height: 33px; }
                    .track { flex: 1; display: flex; flex-direction: inherit; }
                    .before { flex: ${this.getAttribute('before')}; }
                    .thumb { flex: ${this.getAttribute('thumb')}; background: #cdcdcd; }
                    .after { flex: ${this.getAttribute('after')}; }
                </style>
                <button aria-label="Scroll back"><app-icon name="${start}"></app-icon></button>
                <div class="track"><span class="before"></span><span class="thumb"></span><span class="after"></span></div>
                <button aria-label="Scroll on"><app-icon name="${end}"></app-icon></button>
            `;
        }
    });

    customElements.define('nav-tree', class extends View {
        template() {
            return `
                <style>
                    :host { flex: none; display: flex; width: 484px; border-right: 2px solid #f5f5f5; box-sizing: border-box; }
                    nav { flex: 1; min-width: 0; overflow: hidden; margin-right: 1px; }
                    scroll-bar { margin-right: 4px; }
                </style>
                <nav><slot></slot></nav>
                <scroll-bar before="146" thumb="780" after="146"></scroll-bar>
            `;
        }
    });

    customElements.define('nav-item', class extends View {
        template() {
            const level = Number(this.getAttribute('level') || 2);
            return `
                <style>
                    :host { display: block; }
                    :host([level="1"]) { margin-top: 16px; }
                    :host([selected]) { background: #d9d9d9; }
                    :host([faded]) .icon { opacity: 0.5; }
                    a {
                        display: flex;
                        align-items: center;
                        gap: 6px;
                        height: 48px;
                        padding: 2px 6px 0 ${33 + level * 16}px;
                        color: inherit;
                        text-decoration: none;
                        white-space: nowrap;
                    }
                    .pin { margin-left: auto; }
                </style>
                <a href="#">
                    <app-icon class="icon" name="${this.getAttribute('icon')}"></app-icon>
                    <span><slot></slot></span>
                    ${this.hasAttribute('pinned') ? '<app-icon class="pin" name="smallpin"></app-icon>' : ''}
                </a>
            `;
        }
    });

    customElements.define('file-list', class extends View {
        template() {
            const files = [
                ['Device', '28/02/2020 18:21', 'File folder', ''],
                ['Include', '29/02/2020 16:58', 'File folder', ''],
            ];
            return `
                <style>
                    :host { flex: 1; min-width: 0; display: flex; flex-direction: column; margin-left: 2px; }
                    .scroll { flex: 1; min-height: 0; overflow: hidden; padding-left: 20px; }
                    table { table-layout: fixed; border-collapse: separate; border-spacing: 0; width: 1366px; }
                    th {
                        position: relative;
                        height: 52px;
                        padding: 3px 0 0 12px;
                        border-right: 1px solid #e5e5e5;
                        text-align: left;
                        font-weight: normal;
                        color: #4c607a;
                    }
                    th:first-child { padding-left: 14px; }
                    .sort { position: absolute; top: 0; left: 50%; margin-left: -7px; }
                    tbody::before { content: ""; display: block; height: 14px; }
                    td { height: 42px; padding: 0 0 0 12px; color: #6d6d6d; }
                    td:first-child { padding-left: 17px; color: #000; }
                    .name { display: flex; align-items: center; gap: 9px; }
                </style>
                <div class="scroll">
                    <table>
                        <colgroup><col style="width: 592px"><col style="width: 324px"><col style="width: 270px"><col style="width: 180px"></colgroup>
                        <thead>
                            <tr><th>Name<app-icon class="sort" name="sort"></app-icon></th><th>Date modified</th><th>Type</th><th>Size</th></tr>
                        </thead>
                        <tbody>
                            ${files.map(([name, date, type, size]) => `
                                <tr>
                                    <td><span class="name"><app-icon name="folder"></app-icon>${name}</span></td>
                                    <td>${date}</td><td>${type}</td><td>${size}</td>
                                </tr>`).join('')}
                        </tbody>
                    </table>
                </div>
                <scroll-bar horizontal before="0" thumb="1320" after="10"></scroll-bar>
            `;
        }
    });

    customElements.define('status-bar', class extends View {
        template() {
            return `
                <style>
                    :host { flex: none; display: flex; height: 48px; padding-right: 8px; color: #1e395b; }
                    .count { align-self: center; padding: 0 20px 0 28px; border-right: 2px solid #f5f5f5; }
                    .views { display: flex; margin-left: auto; }
                    button { width: 44px; height: 46px; }
                    .active { border: 1px solid #26a0da; background: #cce8f6; }
                </style>
                <span class="count"><slot></slot></span>
                <div class="views">
                    <button class="active" aria-label="Details"><app-icon name="details"></app-icon></button>
                    <button aria-label="Large icons"><app-icon name="pictures"></app-icon></button>
                </div>
            `;
        }
    });
</script>
</body>
</html>
